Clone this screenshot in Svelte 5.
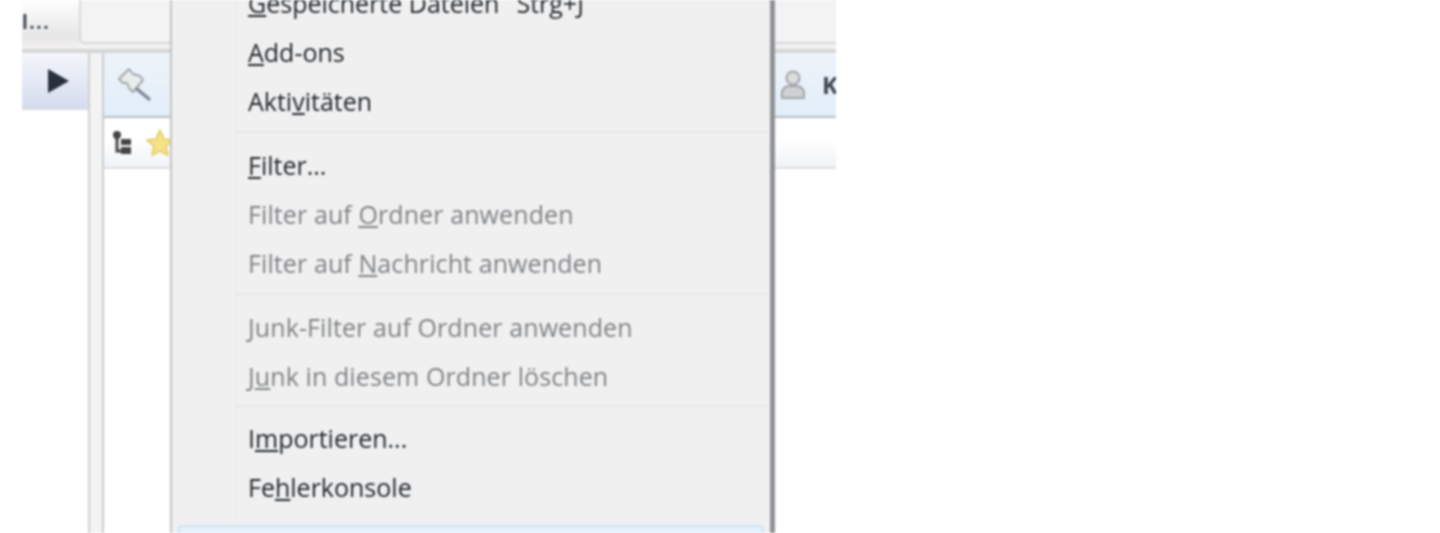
<script>
  const groups = [
    [
      { pre: '', key: 'G', post: 'espeicherte Dateien', hint: 'Strg+J' },
      { pre: '', key: 'A', post: 'dd-ons' },
      { pre: 'Akti', key: 'v', post: 'itäten' }
    ],
    [
      { pre: '', key: 'F', post: 'ilter...' },
      { pre: 'Filter auf ', key: 'O', post: 'rdner anwenden', off: true },
      { pre: 'Filter auf ', key: 'N', post: 'achricht anwenden', off: true }
    ],
    [
      { pre: '', key: 'J', post: 'unk-Filter auf Ordner anwenden', off: true },
      { pre: 'J', key: 'u', post: 'nk in diesem Ordner löschen', off: true }
    ],
    [
      { pre: 'I', key: 'm', post: 'portieren...' },
      { pre: 'Fe', key: 'h', post: 'lerkonsole' }
    ]
  ];
</script>

<div class="page">
  <div class="window">
    <div class="tabs">
      <div class="tab"><span>l...</span></div>
      <div class="tabpanel"></div>
    </div>
    <div class="main">
      <div class="left">
        <div class="leftbar">
          <svg width="24" height="26" viewBox="0 0 24 26"><path d="M2 1 L23 13 L2 25 Z" fill="#27303c"/></svg>
        </div>
      </div>
      <div class="splitter"></div>
      <div class="right">
        <div class="toolbar">
          <svg class="pin" width="38" height="38" viewBox="0 0 38 38">
            <path d="M3 13 L13 3 L17 8 L24 10 L27 14 L17 26 L13 22 L11 17 L7 17 Z" fill="#e9ecec" stroke="#a4a9aa" stroke-width="2" stroke-linejoin="round"/>
            <path d="M21 23 L33 33" stroke="#7f8a94" stroke-width="3.5" stroke-linecap="round"/>
          </svg>
          <div class="person">
            <svg width="26" height="30" viewBox="0 0 26 30">
              <circle cx="13" cy="8" r="6.5" fill="#dcdcdc" stroke="#a2a6a8" stroke-width="2"/>
              <path d="M2 28 V22 Q3 17 9 16 H17 Q23 17 24 22 V28 Z" fill="#cfd0d2" stroke="#a2a6a8" stroke-width="2"/>
            </svg>
            <b>K</b>
          </div>
        </div>
        <div class="filters">
          <svg width="20" height="24" viewBox="0 0 20 24">
            <circle cx="5" cy="4" r="4" fill="#444"/>
            <path d="M5 7 V20 H11" stroke="#444" stroke-width="3" fill="none"/>
            <rect x="9" y="8" width="10" height="6" fill="#444"/>
            <rect x="9" y="16" width="10" height="7" fill="#444"/>
          </svg>
          <svg width="28" height="28" viewBox="0 0 28 28">
            <path d="M14 1 L18 10 L27 11 L20 17 L22 26 L14 22 L6 26 L8 17 L1 11 L10 10 Z" fill="#f5e388" stroke="#e3c95f" stroke-width="1.5"/>
          </svg>
        </div>
      </div>
    </div>

    <div class="menu">
      <div class="list">
        {#each groups as group, g}
          {#if g > 0}<div class="sep" class:tight={g === 3}></div>{/if}
          {#each group as item}
            <div class="item" class:off={item.off}>
              <span class="label">{item.pre}<u>{item.key}</u>{item.post}</span>
              {#if item.hint}<span class="hint">{item.hint}</span>{/if}
            </div>
          {/each}
        {/each}
        <div class="hover"></div>
      </div>
    </div>
  </div>
</div>

<style>
  :global(body) {
    margin: 0;
    background: #fff;
  }
  .page {
    height: 533px;
    overflow: hidden;
    padding-left: 22px;
    background: #fff;
    font-family: "Open Sans", "Noto Sans", sans-serif;
  }
  .window {
    position: relative;
    width: 814px;
    height: 533px;
    overflow: hidden;
    filter: blur(0.9px);
  }
  .tabs {
    display: flex;
    box-sizing: border-box;
    height: 53px;
    border-bottom: 4px solid #d6d6d6;
    background: #f2f2f2;
  }
  .tab {
    width: 57px;
    height: 49px;
    background: linear-gradient(#fff, #e6e6e6 75%, #f3f0f0);
    display: flex;
    align-items: center;
    font-size: 19px;
    font-weight: 700;
    letter-spacing: 1.5px;
    color: #39424c;
    padding-bottom: 6px;
    box-sizing: border-box;
  }
  .tabpanel {
    flex: 1;
    height: 44px;
    background: #f3f3f3;
    border-left: 2px solid #d8d8d8;
    border-bottom: 2px solid #d8d8d8;
    border-bottom-left-radius: 5px;
    box-sizing: border-box;
  }
  .main {
    display: flex;
    height: 480px;
  }
  .left {
    width: 68px;
    box-sizing: border-box;
    border-right: 2px solid #d0d0d0;
  }
  .leftbar {
    height: 57px;
    box-sizing: border-box;
    border-bottom: 2px solid #dadce2;
    background: linear-gradient(#f4f6fb, #d5dcee);
    display: flex;
    align-items: center;
    justify-content: flex-end;
    padding-right: 18px;
  }
  .splitter {
    width: 12px;
    background: #f3f3f3;
  }
  .right {
    flex: 1;
    border-left: 2px solid #c9ccd2;
    min-width: 0;
  }
  .toolbar {
    height: 65px;
    box-sizing: border-box;
    border-bottom: 2px solid #b9bcc2;
    background: linear-gradient(#eef3fa, #e2eef9);
    display: flex;
    align-items: center;
    justify-content: space-between;
    padding-left: 12px;
  }
  .person {
    display: flex;
    align-items: center;
    gap: 16px;
  }
  .person b {
    font-size: 24px;
    color: #3e4650;
    width: 14px;
    overflow: hidden;
  }
  .filters {
    height: 51px;
    box-sizing: border-box;
    border-bottom: 2px solid #dfe0e3;
    background: linear-gradient(#fff 45%, #f0f2f6);
    display: flex;
    align-items: center;
    gap: 14px;
    padding-left: 8px;
  }
  .menu {
    position: absolute;
    left: 148px;
    top: -22px;
    width: 605px;
    height: 560px;
    box-sizing: border-box;
    background: #f0f0f0;
    border-left: 2px solid #c3c3c3;
    border-right: 5px solid #8f9296;
  }
  .list {
    margin-left: 62px;
    margin-right: 3px;
    border-left: 2px solid #ececec;
    padding-left: 12px;
    height: 100%;
    box-sizing: border-box;
  }
  .item {
    height: 49px;
    display: flex;
    align-items: center;
    font-size: 25px;
    color: #20262c;
    font-weight: 500;
    white-space: nowrap;
  }
  .item.off {
    color: #7f8286;
    font-weight: 500;
    letter-spacing: 0.1px;
  }
  .hint {
    margin-left: 17px;
  }
  .sep {
    height: 2px;
    margin: 6px 0 7px -12px;
    background: #e6e6e6;
  }
  .sep.tight {
    margin: 5px 0 6px -12px;
  }
  .hover {
    position: absolute;
    left: 6px;
    right: 6px;
    top: 547px;
    height: 40px;
    background: #e6f1fb;
    border: 2px solid #cfe2f3;
    border-radius: 4px;
  }
</style>
